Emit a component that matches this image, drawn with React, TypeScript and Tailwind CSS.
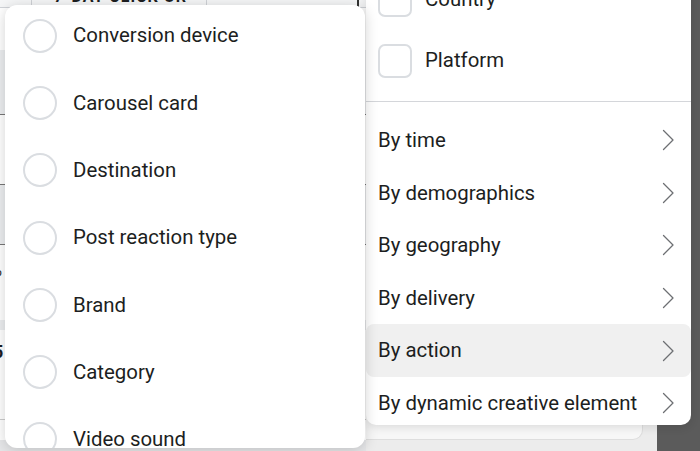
const radios = [
  "Conversion device",
  "Carousel card",
  "Destination",
  "Post reaction type",
  "Brand",
  "Category",
  "Video sound",
];

const menu = [
  "By time",
  "By demographics",
  "By geography",
  "By delivery",
  "By action",
  "By dynamic creative element",
];

const Chevron = () => (
  <svg width="13" height="22" viewBox="0 0 13 22" fill="none" className="shrink-0">
    <path d="M1.5 1.5 L11 11 L1.5 20.5" stroke="#6d6f73" strokeWidth="1.3" strokeLinecap="round" strokeLinejoin="round" />
  </svg>
);

const Background = () => {
  return (
    <div className="flex h-full w-full">
      {/* table behind the panels */}
      <div className="flex flex-col w-[366px] h-full bg-white overflow-hidden">
        <div className="flex h-[34px] -mt-[26px] shrink-0 bg-[#f5f6f7] border-b border-[#d0d3d8] text-[16px] font-bold text-[#1c1e21] tracking-[1px]">
          <div className="w-[32px] border-r border-[#cfd2d6]" />
          <div className="w-[175px] border-r border-[#cfd2d6] pl-[22px] flex items-end leading-[20px] uppercase">7-day click or</div>
          <div className="flex-1" />
          <div className="w-[2px] bg-[#333] mr-[7px]" />
        </div>
        <div className="h-[42px] shrink-0 bg-white" />
        <div className="h-[65px] shrink-0 bg-[#eceef0] border-b border-[#777]" />
        <div className="h-[70px] shrink-0 bg-white border-b border-[#777]" />
        <div className="h-[60px] shrink-0 bg-[#eceef0] border-b border-[#777]" />
        <div className="h-[75px] shrink-0 bg-white text-[16px] text-[#1c1e21] -ml-[32px] pt-[14px]">2.5%</div>
        <div className="h-[10px] shrink-0 bg-[#eceef0]" />
        <div className="h-[90px] shrink-0 bg-white border-b border-[#ccc] text-[18px] font-bold text-[#1c1e21] -ml-[7px] pt-[8px]">5</div>
        <div className="h-[20px] shrink-0 bg-white" />
        <div className="flex-1 bg-[#e6e7e9]" />
      </div>
      <div className="flex flex-col flex-1 h-full bg-[#ececec]">
        <div className="w-[277px] h-[440px] bg-[#f7f7f7] rounded-br-[10px] border-b border-r border-[#dedede]" />
      </div>
      <div className="w-[43px] h-full bg-[#5b5b5b]" />
    </div>
  );
};

const App = () => {
  return (
    <div
      className="relative w-[700px] h-[451px] overflow-hidden bg-[#ececec]"
      style={{ fontFamily: "Roboto, 'Liberation Sans', Arial, sans-serif" }}
    >
      <Background />

      {/* right menu */}
      <div className="absolute left-[366px] top-[-39px] w-[325px] h-[464px] bg-white rounded-[10px] shadow-[0_2px_10px_rgba(0,0,0,0.12)] overflow-hidden">
        <div className="pt-[8px] px-[12px]">
          {["Country", "Platform"].map((t) => (
            <div key={t} className="flex items-center h-[61px] gap-[13px]">
              <div className="w-[34px] h-[34px] rounded-[7px] border-2 border-[#dadde1] bg-white" />
              <span className="text-[20.4px] text-[#1c1e21]">{t}</span>
            </div>
          ))}
        </div>
        <div className="mt-[10px] h-px bg-[#d4d6da]" />
        <div className="mt-[12px] flex flex-col">
          {menu.map((t) => (
            <div
              key={t}
              className={
                "flex items-center justify-between h-[52.6px] pl-[12px] pr-[16px] rounded-[8px] " +
                (t === "By action" ? "bg-[#f0f0f0]" : "")
              }
            >
              <span className="text-[20.4px] text-[#1c1e21]">{t}</span>
              <Chevron />
            </div>
          ))}
        </div>
      </div>

      {/* left submenu */}
      <div className="absolute left-[5px] top-[5px] w-[360px] h-[443px] bg-white rounded-[12px] shadow-[0_2px_14px_rgba(0,0,0,0.18)] overflow-hidden">
        <div className="-mt-[3px] flex flex-col">
          {radios.map((t) => (
            <div key={t} className="flex items-center h-[67.3px] pl-[18px] gap-[16px] shrink-0">
              <div className="w-[34px] h-[34px] rounded-full border-2 border-[#dadde1] bg-white" />
              <span className="text-[20.4px] text-[#1c1e21]">{t}</span>
            </div>
          ))}
        </div>
      </div>
    </div>
  );
};

export default App;
